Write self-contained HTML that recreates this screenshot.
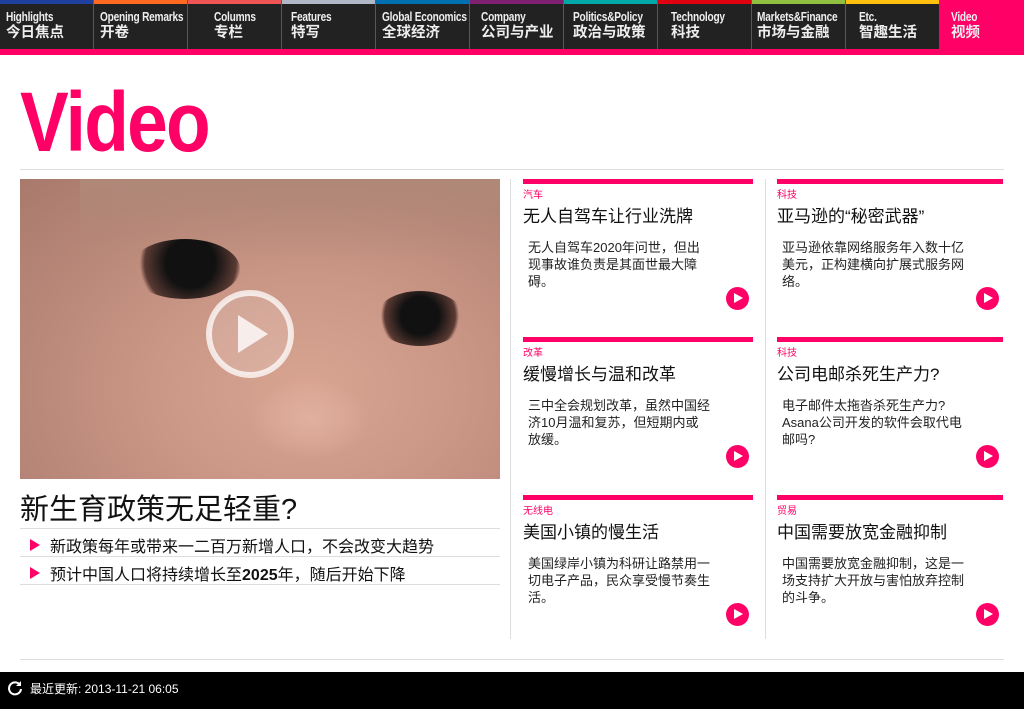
<!DOCTYPE html>
<html><head><meta charset="utf-8"><style>
*{margin:0;padding:0;box-sizing:border-box}
body{width:1024px;height:709px;background:#fff;position:relative;overflow:hidden;font-family:"Liberation Sans","Noto Sans CJK SC",sans-serif}
.nav{position:absolute;left:0;top:0;width:1024px;height:55px;background:#ff0066}
.nav .it{position:absolute;top:0;height:49px;width:93px;background:#222;color:#eee;font-weight:bold;padding:9px 0 0 6px;white-space:nowrap;overflow:hidden}
.nav .it i{position:absolute;left:0;top:0;height:4px;width:100%}
.nav .it b{display:block;font-size:13px;letter-spacing:-0.3px;line-height:15px;transform:scaleX(0.78);transform-origin:left}
.nav .it span{display:block;font-size:14.5px;line-height:19px}
h1{position:absolute;left:20px;top:74px;font-size:84px;color:#ff0066;font-weight:bold;letter-spacing:-2px;transform:scaleX(0.87);transform-origin:left}
.hl{position:absolute;height:1px;background:#ddd}
.vl{position:absolute;width:1px;background:#ddd;top:179px;height:460px}
.photo{position:absolute;left:20px;top:179px;width:480px;height:300px;overflow:hidden;background:radial-gradient(ellipse at 60% 70%,#d9a592 0%,#c99585 40%,#a8796c 100%)}
.card{position:absolute;width:230px;height:150px;border-top:5px solid #ff0066}
.card .c{font-size:10px;color:#ff0066;margin-top:2px}
.card .t{font-size:17px;color:#111;margin-top:4px;line-height:24px}
.card .d{font-size:13px;color:#222;line-height:17px;margin:10px 0 0 5px;width:182px}
.card .p{position:absolute;right:4px;top:103px;width:23px;height:23px;border-radius:50%;background:#ff0066}
.card .p:after{content:"";position:absolute;left:8px;top:6px;border-left:9px solid #fff;border-top:5.5px solid transparent;border-bottom:5.5px solid transparent}
.bul{position:absolute;left:20px;width:480px;height:28px;border-bottom:1px solid #ddd;font-size:16px;color:#111;padding:4px 0 0 30px}
.bul:before{content:"";position:absolute;left:10px;top:10px;border-left:10px solid #ff0066;border-top:6px solid transparent;border-bottom:6px solid transparent}
.foot{position:absolute;left:0;top:672px;width:1024px;height:37px;background:#000;color:#fff;font-size:12px;padding:8px 0 0 30px}
</style></head><body>
<div class="nav">
<div class="it" style="left:0"><i style="background:#2040a0"></i><b>Highlights</b><span>今日焦点</span></div>
<div class="it" style="left:94px"><i style="background:#ff6a20"></i><b>Opening Remarks</b><span>开卷</span></div>
<div class="it" style="left:188px;padding-left:26px"><i style="background:#f05555"></i><b>Columns</b><span>专栏</span></div>
<div class="it" style="left:282px;padding-left:9px"><i style="background:#b0b8c8"></i><b>Features</b><span>特写</span></div>
<div class="it" style="left:376px"><i style="background:#0070b0"></i><b>Global Economics</b><span>全球经济</span></div>
<div class="it" style="left:470px;padding-left:11px"><i style="background:#802070"></i><b>Company</b><span>公司与产业</span></div>
<div class="it" style="left:564px;padding-left:9px"><i style="background:#00a8a8"></i><b>Politics&amp;Policy</b><span>政治与政策</span></div>
<div class="it" style="left:658px;padding-left:13px"><i style="background:#e00010"></i><b>Technology</b><span>科技</span></div>
<div class="it" style="left:752px;padding-left:5px"><i style="background:#90c040"></i><b>Markets&amp;Finance</b><span>市场与金融</span></div>
<div class="it" style="left:846px;padding-left:13px"><i style="background:#ffc010"></i><b>Etc.</b><span>智趣生活</span></div>
<div class="it" style="left:940px;width:84px;background:#ff0066;padding-left:11px"><b>Video</b><span>视频</span></div>
</div>
<h1>Video</h1>
<div class="hl" style="left:20px;top:169px;width:984px"></div>
<div class="photo">
<div style="position:absolute;left:60px;top:0;width:420px;height:80px;background:linear-gradient(#b08878,transparent)"></div>
<div style="position:absolute;left:110px;top:60px;width:110px;height:60px;border-radius:50%;background:radial-gradient(circle at 55% 40%,#111 35%,#5a3a33 65%,transparent 72%)"></div>
<div style="position:absolute;left:355px;top:112px;width:90px;height:55px;border-radius:50%;background:radial-gradient(circle at 50% 45%,#111 35%,#5a3a33 65%,transparent 72%)"></div>
<div style="position:absolute;left:230px;top:200px;width:120px;height:80px;border-radius:50%;background:radial-gradient(#e2b0a0,transparent 70%)"></div>
<svg style="position:absolute;left:185px;top:110px" width="90" height="90" viewBox="0 0 90 90"><circle cx="45" cy="45" r="41" fill="rgba(255,255,255,0.15)" stroke="rgba(255,255,255,0.75)" stroke-width="6"/><path d="M33 26 L63 45 L33 64Z" fill="rgba(255,255,255,0.8)"/></svg>
</div>
<div style="position:absolute;left:20px;top:486px;font-size:29px;color:#111">新生育政策无足轻重?</div>
<div class="hl" style="left:20px;top:528px;width:480px"></div>
<div class="bul" style="top:529px">新政策每年或带来一二百万新增人口，不会改变大趋势</div>
<div class="bul" style="top:557px">预计中国人口将持续增长至<b>2025</b>年，随后开始下降</div>
<div class="vl" style="left:510px"></div>
<div class="vl" style="left:765px"></div>
<div class="card" style="left:523px;top:179px"><div class="c">汽车</div><div class="t">无人自驾车让行业洗牌</div><div class="d">无人自驾车2020年问世，但出现事故谁负责是其面世最大障碍。</div><div class="p"></div></div>
<div class="card" style="left:777px;top:179px;width:226px"><div class="c">科技</div><div class="t">亚马逊的“秘密武器”</div><div class="d">亚马逊依靠网络服务年入数十亿美元，正构建横向扩展式服务网络。</div><div class="p"></div></div>
<div class="card" style="left:523px;top:337px"><div class="c">改革</div><div class="t">缓慢增长与温和改革</div><div class="d">三中全会规划改革，虽然中国经济10月温和复苏，但短期内或放缓。</div><div class="p"></div></div>
<div class="card" style="left:777px;top:337px;width:226px"><div class="c">科技</div><div class="t">公司电邮杀死生产力?</div><div class="d">电子邮件太拖沓杀死生产力?Asana公司开发的软件会取代电邮吗?</div><div class="p"></div></div>
<div class="card" style="left:523px;top:495px"><div class="c">无线电</div><div class="t">美国小镇的慢生活</div><div class="d">美国绿岸小镇为科研让路禁用一切电子产品，民众享受慢节奏生活。</div><div class="p"></div></div>
<div class="card" style="left:777px;top:495px;width:226px"><div class="c">贸易</div><div class="t">中国需要放宽金融抑制</div><div class="d">中国需要放宽金融抑制，这是一场支持扩大开放与害怕放弃控制的斗争。</div><div class="p"></div></div>
<div class="hl" style="left:20px;top:659px;width:984px"></div>
<div class="foot"><svg style="position:absolute;left:7px;top:8px" width="16" height="16" viewBox="0 0 16 16"><path d="M13 5A6 6 0 1 0 14 9" fill="none" stroke="#fff" stroke-width="2"/><path d="M14 1V6H9Z" fill="#fff"/></svg>最近更新: 2013-11-21 06:05</div>
</body></html>
